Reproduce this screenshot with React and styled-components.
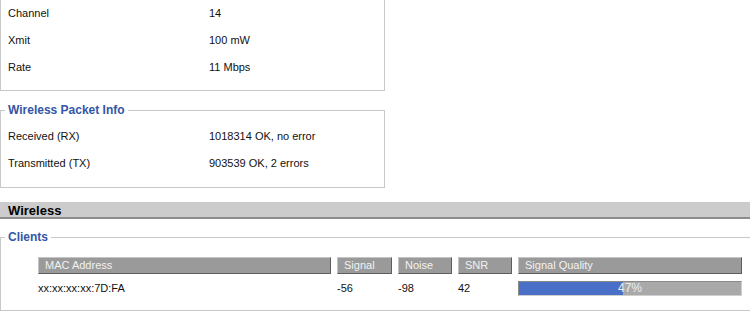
import React from "react"
import styled, { createGlobalStyle } from "styled-components"

const GlobalStyle = createGlobalStyle`
  html, body {
    margin: 0;
    padding: 0;
    background: #fff;
    overflow: hidden;
  }
  body {
    font-family: "Liberation Sans", Arial, sans-serif;
    font-size: 11px;
    color: #111;
  }
`

const Page = styled.div`
  display: flex;
  flex-direction: column;
  width: 750px;
`

const Group = styled.fieldset`
  box-sizing: border-box;
  width: ${(p) => (p.$wide ? "100%" : "385px")};
  margin: ${(p) => p.$mt || 0}px 0 0 0;
  padding: ${(p) => p.$pt || 0}px ${(p) => (p.$wide ? 0 : 8)}px ${(p) => p.$pb || 0}px 7px;
  border: 1px solid #c8c8c8;
  border-top: ${(p) => (p.$cut ? "none" : "1px solid #c8c8c8")};
  border-right: ${(p) => (p.$wide ? "none" : "1px solid #c8c8c8")};
  min-inline-size: 0;
`

const Legend = styled.legend`
  margin-left: -3px;
  padding: 0 3px;
  font-size: 12px;
  line-height: 15px;
  font-weight: bold;
  color: #3456a6;
`

const InfoRow = styled.div`
  box-sizing: border-box;
  display: grid;
  grid-template-columns: 201px 1fr;
  height: 27px;
  padding-bottom: 2px;
  align-items: center;
`

const SectionBar = styled.div`
  margin-top: 14px;
  height: 15px;
  padding-left: 8px;
  background: #cccccc;
  border-bottom: 2px solid #8c8c8c;
  font-size: 13px;
  font-weight: bold;
  line-height: 18px;
  color: #000;
  overflow: visible;
`

const Table = styled.table`
  margin-left: 24px;
  border-collapse: separate;
  border-spacing: 6px;
  table-layout: fixed;
  width: 716px;
`

const HeadCell = styled.th`
  box-sizing: border-box;
  width: ${(p) => p.$w}px;
  height: 17px;
  padding: 0 0 0 6px;
  background: #9a9a9a;
  border-top: 1px solid #c4c4c4;
  border-left: 1px solid #c4c4c4;
  border-bottom: 1px solid #5e5e5e;
  border-right: 1px solid #5e5e5e;
  font-size: 11px;
  font-weight: normal;
  text-align: left;
  color: #f2f2f2;
  line-height: 15px;
  white-space: nowrap;
`

const Cell = styled.td`
  padding: 0;
  height: 16px;
  vertical-align: middle;
  white-space: nowrap;
`

const Bar = styled.div`
  box-sizing: border-box;
  display: grid;
  height: 15px;
  background: #a9a9a9;
  border-top: 1px solid #8a8a8a;
  border-left: 1px solid #8a8a8a;
  border-bottom: 1px solid #cfcfcf;
  border-right: 1px solid #cfcfcf;
`

const Fill = styled.div`
  grid-area: 1 / 1;
  height: 100%;
  background: #4a6fc6;
`

const BarLabel = styled.span`
  grid-area: 1 / 1;
  text-align: center;
  font-size: 12px;
  line-height: 13px;
  color: #eeeeee;
`

const radio = [
  ["Channel", "14"],
  ["Xmit", "100 mW"],
  ["Rate", "11 Mbps"],
]

const packets = [
  ["Received (RX)", "1018314 OK, no error"],
  ["Transmitted (TX)", "903539 OK, 2 errors"],
]

const columns = [
  ["MAC Address", 293],
  ["Signal", 55],
  ["Noise", 54],
  ["SNR", 54],
  ["Signal Quality", 224],
]

const clients = [
  { mac: "xx:xx:xx:xx:7D:FA", signal: -56, noise: -98, snr: 42, quality: 47 },
]

export default function App() {
  return (
    <Page>
      <GlobalStyle />
      <Group $cut $pb={9}>
        {radio.map(([label, value]) => (
          <InfoRow key={label}>
            <span>{label}</span>
            <span>{value}</span>
          </InfoRow>
        ))}
      </Group>

      <Group $mt={12} $pt={5} $pb={10}>
        <Legend>Wireless Packet Info</Legend>
        {packets.map(([label, value]) => (
          <InfoRow key={label}>
            <span>{label}</span>
            <span>{value}</span>
          </InfoRow>
        ))}
      </Group>

      <SectionBar>Wireless</SectionBar>

      <Group $wide $mt={11} $pt={6} $pb={8}>
        <Legend>Clients</Legend>
        <Table>
          <thead>
            <tr>
              {columns.map(([name, w]) => (
                <HeadCell key={name} $w={w}>
                  {name}
                </HeadCell>
              ))}
            </tr>
          </thead>
          <tbody>
            {clients.map((c) => (
              <tr key={c.mac}>
                <Cell>{c.mac}</Cell>
                <Cell>{c.signal}</Cell>
                <Cell>{c.noise}</Cell>
                <Cell>{c.snr}</Cell>
                <Cell>
                  <Bar>
                    <Fill style={{ width: `${c.quality}%` }} />
                    <BarLabel>{c.quality}%</BarLabel>
                  </Bar>
                </Cell>
              </tr>
            ))}
          </tbody>
        </Table>
      </Group>
    </Page>
  )
}
